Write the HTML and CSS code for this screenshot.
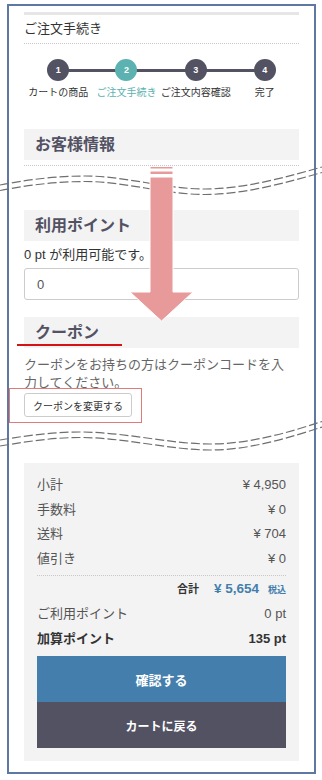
FILE: index.html
```html
<!DOCTYPE html>
<html>
<head>
    <title>ご注文手続き</title>
    <link rel="stylesheet" href="styles.css">
</head>
<body>
    <div class="frame">
        <div class="page-head">
            <h1 class="page-title">ご注文手続き</h1>
        </div>

        <ol class="steps">
            <li class="step"><span class="step-num">1</span><span class="step-label">カートの商品</span></li>
            <li class="step active"><span class="step-num">2</span><span class="step-label">ご注文手続き</span></li>
            <li class="step"><span class="step-num">3</span><span class="step-label">ご注文内容確認</span></li>
            <li class="step"><span class="step-num">4</span><span class="step-label">完了</span></li>
        </ol>

        <section class="block customer">
            <h2 class="block-title">お客様情報</h2>
        </section>

        <section class="block points">
            <h2 class="block-title">利用ポイント</h2>
            <p class="note">0 pt が利用可能です。</p>
            <input class="point-input" type="text" value="0">
        </section>

        <section class="block coupon">
            <h2 class="block-title">クーポン</h2>
            <p class="coupon-note">クーポンをお持ちの方はクーポンコードを入力してください。</p>
            <button class="coupon-btn" type="button">クーポンを変更する</button>
        </section>

        <div class="summary">
            <dl class="sum-row"><dt>小計</dt><dd>¥ 4,950</dd></dl>
            <dl class="sum-row"><dt>手数料</dt><dd>¥ 0</dd></dl>
            <dl class="sum-row"><dt>送料</dt><dd>¥ 704</dd></dl>
            <dl class="sum-row"><dt>値引き</dt><dd>¥ 0</dd></dl>
            <div class="total-row">
                <span class="total-label">合計</span>
                <span class="total-price">¥ 5,654</span>
                <span class="total-tax">税込</span>
            </div>
            <dl class="sum-row"><dt>ご利用ポイント</dt><dd>0 pt</dd></dl>
            <dl class="sum-row strong"><dt>加算ポイント</dt><dd>135 pt</dd></dl>
            <button class="btn btn-primary" type="button">確認する</button>
            <button class="btn btn-dark" type="button">カートに戻る</button>
        </div>
    </div>

    <!-- annotation marks drawn over the screenshot -->
    <svg class="cut" width="322" height="40" viewBox="0 160 322 40">
        <path d="M0,185 C30,179 60,176 85,176 C125,176 165,189 205,189 C245,189 290,176 322,167" />
        <path d="M0,190.5 C30,184.5 60,181.5 85,181.5 C125,181.5 165,194.5 205,194.5 C245,194.5 290,181.5 322,172.5" />
    </svg>
    <svg class="cut cut-2" width="322" height="40" viewBox="0 415 322 40">
        <path d="M0,440 C30,435 55,432 80,432 C125,432 170,444 210,444 C250,444 290,432 322,421.5" />
        <path d="M0,446 C30,441 55,437.5 80,437.5 C125,437.5 170,450 210,450 C250,450 290,437.5 322,427" />
    </svg>
    <svg class="arrow" width="68" height="160" viewBox="128 164 68 160">
        <rect x="150" y="166.5" width="23" height="2.5" />
        <rect x="150" y="171" width="23" height="3.5" />
        <polygon points="150,177 173,177 173,292 193,292 161.5,321 130,292 150,292" />
    </svg>
    <span class="mark-line"></span>
    <span class="mark-box"></span>
</body>
</html>
```

FILE: styles.css
```css
body {
    margin: 0;
    padding: 0;
    background-color: #fff;
    font-family: "Liberation Sans", Arial, "Noto Sans CJK JP", sans-serif;
    color: #333;
    position: relative;
}
.frame {
    box-sizing: border-box;
    width: 309px;
    margin: 4px 0 0 7px;
    padding: 6px 15px 11px 15px;
    border: 2px solid #5d78a3;
}
.page-head {
    border-top: 3px solid #e6e6e6;
    border-bottom: 1px dotted #c8c8c8;
}
.page-title {
    margin: 0;
    font-size: 13px;
    font-weight: normal;
    line-height: 28px;
    color: #333;
}
.steps {
    position: relative;
    list-style: none;
    margin: 0;
    padding: 15px 0 29px;
    display: grid;
    grid-template-columns: repeat(4, 1fr);
}
.steps::before {
    content: "";
    position: absolute;
    left: 12.5%;
    right: 12.5%;
    top: 24.5px;
    height: 3px;
    background-color: #525263;
}
.step {
    position: relative;
    display: flex;
    flex-direction: column;
    align-items: center;
}
.step-num {
    width: 22px;
    height: 22px;
    border-radius: 50%;
    background-color: #525263;
    color: #fff;
    font-size: 9px;
    font-weight: bold;
    line-height: 22px;
    text-align: center;
}
.step-label {
    margin-top: 5px;
    font-size: 10px;
    line-height: 14px;
    white-space: nowrap;
    color: #333;
}
.step.active .step-num {
    background-color: #5cb1b1;
}
.step.active .step-label {
    color: #5cb1b1;
}
.block-title {
    margin: 0;
    padding-left: 11px;
    height: 31px;
    line-height: 31px;
    background-color: #f3f3f3;
    font-size: 16px;
    font-weight: bold;
    color: #525263;
}
.customer {
    padding-bottom: 5px;
    border-bottom: 1px dotted #c8c8c8;
}
.points {
    margin-top: 44px;
}
.note {
    margin: 5px 0 0;
    font-size: 13px;
    line-height: 18px;
    color: #333;
}
.point-input {
    display: block;
    box-sizing: border-box;
    width: 100%;
    height: 32px;
    margin-top: 4px;
    padding: 0 12px;
    border: 1px solid #ccc;
    border-radius: 3px;
    font-family: inherit;
    font-size: 13px;
    color: #555;
}
.coupon {
    margin-top: 17px;
}
.coupon-note {
    margin: 8px 0 0;
    padding-right: 10px;
    font-size: 13px;
    line-height: 18px;
    color: #666;
}
.coupon-btn {
    display: block;
    margin-top: 1px;
    height: 24px;
    padding: 0 8px;
    border: 1px solid #ccc;
    border-radius: 3px;
    background-color: #fff;
    font-family: inherit;
    font-size: 10px;
    color: #333;
}
.summary {
    margin-top: 46px;
    padding: 10px 13px 13px;
    background-color: #f3f3f3;
}
.sum-row {
    display: flex;
    justify-content: space-between;
    margin: 0;
    font-size: 13px;
    line-height: 24.5px;
    color: #555;
}
.sum-row dt,
.sum-row dd {
    margin: 0;
}
.sum-row.strong {
    font-weight: bold;
    color: #333;
}
.total-row {
    display: flex;
    justify-content: flex-end;
    align-items: baseline;
    gap: 9px;
    margin-top: 4px;
    border-top: 1px dotted #c8c8c8;
    height: 26px;
    line-height: 26px;
    font-weight: bold;
}
.total-label {
    margin-right: 6px;
    font-size: 11px;
    color: #333;
}
.total-price {
    font-size: 13.5px;
    color: #437ead;
}
.total-tax {
    font-size: 9px;
    color: #437ead;
}
.btn {
    display: block;
    width: 100%;
    height: 46px;
    border: 0;
    font-family: inherit;
    font-weight: bold;
    color: #fff;
}
.btn-primary {
    margin-top: 5px;
    background-color: #437ead;
    font-size: 13px;
}
.btn-dark {
    background-color: #525263;
    font-size: 12px;
}
.cut {
    position: absolute;
    left: 0;
    top: 160px;
}
.cut-2 {
    top: 415px;
}
.cut path {
    fill: none;
    stroke: #6f6f6f;
    stroke-width: 1.2;
    stroke-dasharray: 9 3;
}
.arrow {
    position: absolute;
    left: 128px;
    top: 164px;
}
.arrow rect,
.arrow polygon {
    fill: #e89a9a;
    stroke: #fff;
    stroke-width: 1;
}
.mark-line {
    position: absolute;
    left: 17px;
    top: 344px;
    width: 105px;
    height: 2px;
    background-color: #d41414;
}
.mark-box {
    position: absolute;
    left: 9px;
    top: 388px;
    width: 131px;
    height: 33px;
    border: 1.5px solid #e07b7b;
}
```
